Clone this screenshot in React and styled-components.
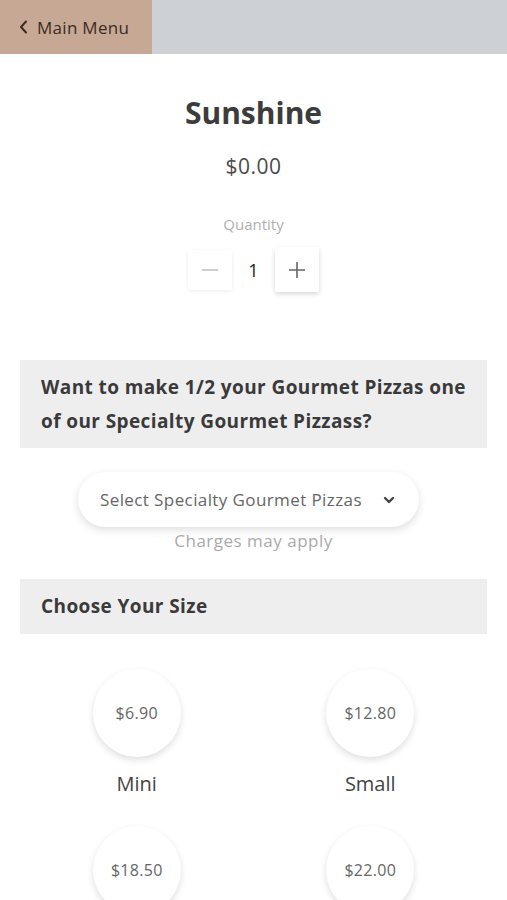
import React from 'react';
import styled, { createGlobalStyle } from 'styled-components';

const GlobalStyle = createGlobalStyle`
  html, body {
    margin: 0;
    padding: 0;
    background: #fff;
    font-family: "Open Sans", Lato, Arial, sans-serif;
  }
  * { box-sizing: border-box; }
`;

const Page = styled.div`
  width: 507px;
  min-height: 900px;
  overflow: hidden;
  background: #fff;
`;

const TopBar = styled.header`
  height: 54px;
  background: #cdd1d5;
  display: flex;
  align-items: stretch;
`;

const BackButton = styled.button`
  width: 152px;
  border: none;
  background: #c7a894;
  color: #3a2c24;
  font-family: inherit;
  font-size: 17px;
  letter-spacing: 0.3px;
  display: flex;
  align-items: center;
  gap: 9px;
  padding: 0 0 0 19px;
  cursor: pointer;
`;

const Header = styled.section`
  display: flex;
  flex-direction: column;
  align-items: center;
  padding-top: 41px;
`;

const Title = styled.h1`
  margin: 0;
  font-size: 30px;
  font-weight: 700;
  color: #3c3c3c;
  line-height: 36px;
`;

const Price = styled.div`
  margin-top: 22px;
  font-size: 21px;
  letter-spacing: 0.5px;
  color: #4a4a4a;
  line-height: 26px;
`;

const QtyLabel = styled.div`
  margin-top: 36px;
  font-size: 15px;
  color: #b0b0b0;
  line-height: 18px;
`;

const Stepper = styled.div`
  margin-top: 14px;
  display: flex;
  align-items: center;
`;

const StepButton = styled.button`
  width: 44px;
  height: ${p => (p.$active ? '45px' : '40px')};
  border: none;
  background: #fff;
  color: ${p => (p.$active ? '#666' : '#c4c4c4')};
  box-shadow: ${p => (p.$active ? '0 2px 5px rgba(0,0,0,0.16)' : '0 1px 4px rgba(0,0,0,0.08)')};
  border-radius: 2px;
  display: flex;
  align-items: center;
  justify-content: center;
  padding: 0;
`;

const QtyValue = styled.span`
  width: 43px;
  text-align: center;
  font-size: 18px;
  color: #222;
`;

const SectionBar = styled.div`
  margin: ${p => p.$top}px 20px 0;
  background: #eeeeee;
  padding: ${p => p.$pad};
  font-size: 19px;
  font-weight: 700;
  letter-spacing: 0.4px;
  color: #3a3a3a;
  line-height: 34px;
`;

const SelectWrap = styled.div`
  display: flex;
  flex-direction: column;
  align-items: center;
  margin-top: 24px;
`;

const SelectPill = styled.button`
  width: 341px;
  height: 55px;
  margin-left: -10px;
  border: none;
  border-radius: 28px;
  background: #fff;
  box-shadow: 0 3px 8px rgba(0,0,0,0.13);
  display: flex;
  align-items: center;
  justify-content: space-between;
  padding: 0 24px 0 22px;
  font-family: inherit;
  font-size: 17px;
  letter-spacing: 0.4px;
  color: #666;
`;

const Hint = styled.div`
  margin-top: 2px;
  font-size: 17px;
  letter-spacing: 0.5px;
  color: #aaa;
  line-height: 24px;
`;

const SizeGrid = styled.div`
  margin: 35px 20px 0;
  display: grid;
  grid-template-columns: 1fr 1fr;
  row-gap: 30px;
`;

const SizeItem = styled.div`
  display: flex;
  flex-direction: column;
  align-items: center;
`;

const Circle = styled.div`
  width: 88px;
  height: 88px;
  border-radius: 50%;
  background: #fff;
  box-shadow: 0 3px 7px rgba(0,0,0,0.13);
  display: flex;
  align-items: center;
  justify-content: center;
  font-size: 16px;
  letter-spacing: 0.3px;
  color: #666;
`;

const SizeName = styled.div`
  margin-top: 15px;
  font-size: 20px;
  color: #444;
  line-height: 24px;
`;

const sizes = [
  { price: '$6.90', name: 'Mini' },
  { price: '$12.80', name: 'Small' },
  { price: '$18.50', name: 'Medium' },
  { price: '$22.00', name: 'Large' },
];

export default function App() {
  return (
    <Page>
      <GlobalStyle />
      <TopBar>
        <BackButton>
          <svg width="9" height="14" viewBox="0 0 9 14" fill="none">
            <path d="M7 1.5 L2 7 L7 12.5" stroke="#3a2c24" strokeWidth="2" strokeLinecap="round" strokeLinejoin="round" />
          </svg>
          Main Menu
        </BackButton>
      </TopBar>

      <Header>
        <Title>Sunshine</Title>
        <Price>$0.00</Price>
        <QtyLabel>Quantity</QtyLabel>
        <Stepper>
          <StepButton>
            <svg width="18" height="18" viewBox="0 0 18 18">
              <path d="M1 9 H17" stroke="currentColor" strokeWidth="1.6" />
            </svg>
          </StepButton>
          <QtyValue>1</QtyValue>
          <StepButton $active>
            <svg width="18" height="18" viewBox="0 0 18 18">
              <path d="M1 9 H17 M9 1 V17" stroke="currentColor" strokeWidth="1.6" />
            </svg>
          </StepButton>
        </Stepper>
      </Header>

      <SectionBar $top={68} $pad="10px 21px">
        Want to make 1/2 your Gourmet Pizzas one of our Specialty Gourmet Pizzass?
      </SectionBar>

      <SelectWrap>
        <SelectPill>
          Select Specialty Gourmet Pizzas
          <svg width="12" height="8" viewBox="0 0 12 8" fill="none">
            <path d="M2 2 L6 6 L10 2" stroke="#444" strokeWidth="2.4" strokeLinecap="round" strokeLinejoin="round" />
          </svg>
        </SelectPill>
        <Hint>Charges may apply</Hint>
      </SelectWrap>

      <SectionBar $top={26} $pad="10px 21px 11px">
        Choose Your Size
      </SectionBar>

      <SizeGrid>
        {sizes.map(s => (
          <SizeItem key={s.name}>
            <Circle>{s.price}</Circle>
            <SizeName>{s.name}</SizeName>
          </SizeItem>
        ))}
      </SizeGrid>
    </Page>
  );
}
